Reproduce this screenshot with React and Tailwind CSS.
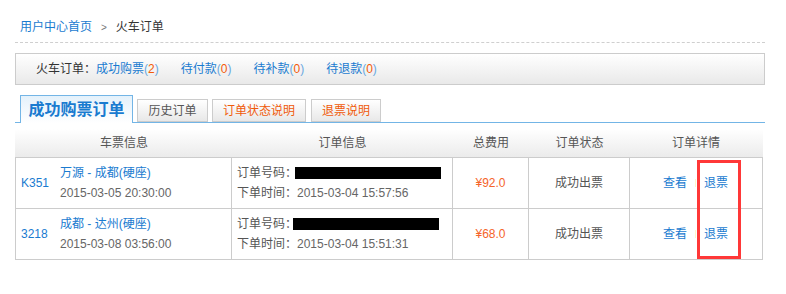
import React from 'react';

const orders = [
    {
        train: 'K351',
        route: '万源 - 成都(硬座)',
        depart: '2015-03-05 20:30:00',
        created: '2015-03-04 15:57:56',
        price: '¥92.0',
        status: '成功出票',
        barX: 'ml-[-2px]',
    },
    {
        train: '3218',
        route: '成都 - 达州(硬座)',
        depart: '2015-03-08 03:56:00',
        created: '2015-03-04 15:51:31',
        price: '¥68.0',
        status: '成功出票',
        barX: 'ml-[-4px]',
    },
];

const counts = [
    { label: '成功购票', n: 2 },
    { label: '待付款', n: 0 },
    { label: '待补款', n: 0 },
    { label: '待退款', n: 0 },
];

const cols = 'grid grid-cols-[216px_221px_76px_101px_132px]';

const App = () => {
    return (
        <div className="w-[786px] h-[294px] bg-white text-[12px] text-[#555] font-['Liberation_Sans','Noto_Sans_CJK_SC',sans-serif] overflow-hidden">
            <div className="ml-[15px] w-[750px]">
                {/* breadcrumb */}
                <div className="h-[43px] pt-[19px] pl-[5px] leading-[16px] border-b border-dashed border-[#cfcfcf]">
                    <span className="text-[#1a7bd0]">用户中心首页</span>
                    <span className="mx-[9px] text-[#777] text-[10px]">&gt;</span>
                    <span className="text-[#333]">火车订单</span>
                </div>

                {/* counts bar */}
                <div className="mt-[10px] h-[32px] flex items-center pl-[20px] border border-[#ccc] bg-gradient-to-b from-white to-[#e9e9e9]">
                    <span className="text-[#333]">火车订单：</span>
                    {counts.map((c, i) => (
                        <span key={c.label} className={i === 0 ? '' : 'ml-[22px]'}>
                            <span className="text-[#1a7bd0]">{c.label}</span>
                            <span className="text-[#6aa8e0]">(</span>
                            <span className="text-[#f25a0a]">{c.n}</span>
                            <span className="text-[#6aa8e0]">)</span>
                        </span>
                    ))}
                </div>

                {/* tabs */}
                <div className="mt-[10px] flex items-end pl-[5px] border-b border-[#73b5e6] h-[28px]">
                    <div className="w-[113px] h-[28px] -mb-px border border-b-0 border-[#73b5e6] bg-gradient-to-b from-[#e4f1fb] to-white flex items-center justify-center text-[16px] font-bold text-[#1a7bd0]">
                        成功购票订单
                    </div>
                    <div className="ml-[4px] w-[71px] h-[23px] border border-[#ccc] bg-gradient-to-b from-white to-[#e8e8e8] flex items-center justify-center text-[#555]">
                        历史订单
                    </div>
                    <div className="ml-[4px] w-[94px] h-[23px] border border-[#ccc] bg-gradient-to-b from-white to-[#e8e8e8] flex items-center justify-center text-[#f05a0a]">
                        订单状态说明
                    </div>
                    <div className="ml-[5px] w-[70px] h-[23px] border border-[#ccc] bg-gradient-to-b from-white to-[#e8e8e8] flex items-center justify-center text-[#f05a0a]">
                        退票说明
                    </div>
                </div>

                {/* table */}
                <div className="mt-[6px] w-[748px]">
                    <div className={`${cols} h-[29px] px-px border-b border-[#ccc] bg-gradient-to-b from-white to-[#ebebeb] text-[#555]`}>
                        <div className="flex items-center justify-center">车票信息</div>
                        <div className="flex items-center justify-center">订单信息</div>
                        <div className="flex items-center justify-center">总费用</div>
                        <div className="flex items-center justify-center">订单状态</div>
                        <div className="flex items-center justify-center">订单详情</div>
                    </div>

                    <div className="relative border-l border-r border-[#ccc]">
                        {orders.map((o) => (
                            <div key={o.train} className={`${cols} h-[51px] border-b border-[#ccc]`}>
                                <div className="flex items-center border-r border-[#ccc]">
                                    <div className="w-[44px] pl-[5px] text-[#1a7bd0]">{o.train}</div>
                                    <div className="leading-[20px]">
                                        <div className="text-[#1a7bd0]">{o.route}</div>
                                        <div className="text-[#666]">{o.depart}</div>
                                    </div>
                                </div>
                                <div className="flex flex-col justify-center pl-[5px] leading-[20px] border-r border-[#ccc]">
                                    <div className="flex items-center">
                                        <span>订单号码：</span>
                                        <span className={`${o.barX} w-[146px] h-[12px] bg-black`} />
                                    </div>
                                    <div>
                                        下单时间：<span className="text-[#666]">{o.created}</span>
                                    </div>
                                </div>
                                <div className="flex items-center justify-center text-[#f5642a] border-r border-[#ccc]">
                                    {o.price}
                                </div>
                                <div className="flex items-center justify-center text-[#555] border-r border-[#ccc]">
                                    {o.status}
                                </div>
                                <div className="flex items-center pl-[33px]">
                                    <span className="text-[#1a7bd0]">查看</span>
                                    <span className="ml-[8px] mr-[8px] w-px h-[8px] bg-[#fff6c8]" />
                                    <span className="text-[#1a7bd0]">退票</span>
                                </div>
                            </div>
                        ))}

                        {/* annotation box */}
                        <div className="absolute left-[681px] top-[2px] w-[44px] h-[99px] border-[3px] border-[#ff3838]" />
                    </div>
                </div>
            </div>
        </div>
    );
};

export default App;
